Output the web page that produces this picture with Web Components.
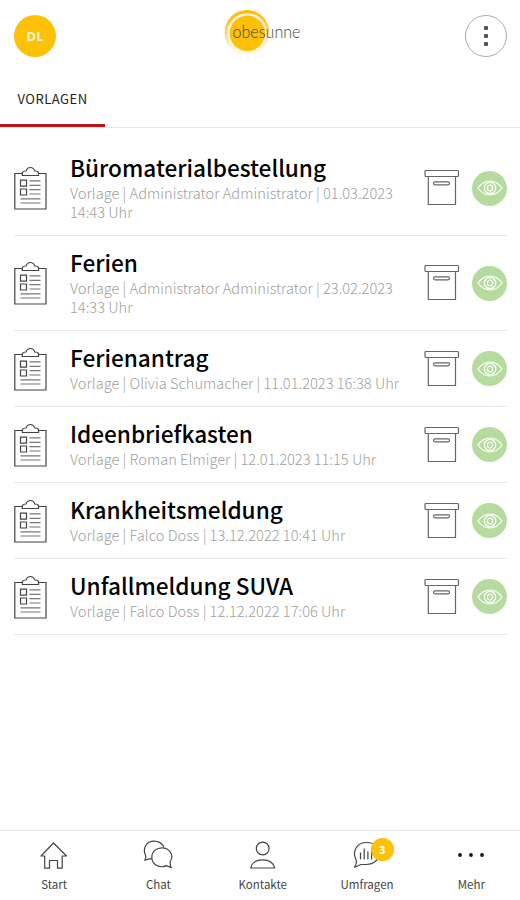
<!DOCTYPE html>
<html lang="de">
<head>
<meta charset="utf-8">
<title>Vorlagen</title>
<style>
html, body { margin: 0; height: 100%; background: #fff; }
body { font-family: "Noto Sans CJK SC", "Noto Sans", sans-serif; color: #111; overflow: hidden; }
</style>
</head>
<body>
<template-app></template-app>
<script>
const icons = {
    clipboard: `<svg width="34" height="44" viewBox="0 0 34 44" fill="none" stroke="#444" stroke-width="1.2">
        <path d="M8.5 7.5H.8V43H32V7.500H24.3"/>
        <path d="M8.300 9.500V6.500Q9 5 12 5Q13.200 1.500 16.400 1.500T20.800 5Q24 5 24.500 6.500V9.500Z"/>
        <path d="M6.500 14.200h6v6h-6zM6.500 23h6v6h-6z"/>
        <path d="M15.500 14.800h11M15.500 19.300h11M15.500 23.700h11M15.500 28h11M6.500 32.800h20M6.500 37h20" stroke="#777"/></svg>`,
    archive: `<svg width="36" height="38" viewBox="0 0 36 38" fill="none" stroke="#666" stroke-width="1.2">
        <rect x="1" y="1.500" width="33.500" height="6" rx="1"/>
        <path d="M4.300 7.500V35.500H31.500V7.500"/>
        <rect x="9.500" y="12.800" width="16" height="3" rx="1.500"/></svg>`,
    eye: `<svg width="26" height="18" viewBox="0 0 26 18" fill="none" stroke="#fff" stroke-width="1.2">
        <path d="M1 9Q6 2 13 2T25 9Q20 16 13 16T1 9Z"/>
        <circle cx="13" cy="9" r="5.700"/><ellipse cx="13" cy="9" rx="2.600" ry="3"/></svg>`,
    home: `<svg width="30" height="30" viewBox="0 0 30 30" fill="none" stroke="#444" stroke-width="1.2">
        <path d="M14.500 3L2 16H5.700V28.200H10.500V20.500H18.500V28.200H23.200V16H27.500Z" stroke-linejoin="round"/></svg>`,
    chat: `<svg width="30" height="30" viewBox="0 0 30 30" fill="none" stroke="#444" stroke-width="1.2" stroke-linejoin="round">
        <path d="M8.800 18.700Q5.500 19 1.800 20.300Q3.300 17.500 2.600 15.500C-1 8 4 1.200 11 1.200Q18 1.200 21 7.200"/>
        <path d="M27.200 21.500Q26.800 25 28.300 27.800L23.500 25.600C16 29 8.800 24 8.800 17.200C8.800 11.500 13.500 7.800 19 7.800C26.500 7.800 31.500 15 27.200 21.500Z"/></svg>`,
    person: `<svg width="30" height="30" viewBox="0 0 30 30" fill="none" stroke="#444" stroke-width="1.2">
        <ellipse cx="14.700" cy="8.500" rx="6.400" ry="6.300"/>
        <path d="M2.700 28C4 22.500 8.500 19.800 14.700 19.800S25.400 22.500 26.700 28Z" stroke-linejoin="round"/></svg>`,
    poll: `<svg width="30" height="30" viewBox="0 0 30 30" fill="none" stroke="#444" stroke-width="1.2" stroke-linejoin="round">
        <path d="M4.300 20.500C-.5 11 5 2.500 14.500 2.500S27.500 8 27.500 13.500S22 24.500 14.500 24.500H9L2.500 27.200Q5 24 4.300 20.500Z"/>
        <path d="M8.500 19.500v-7M12.200 19.500v-11M15.900 19.500v-8M19.600 19.500v-12"/></svg>`,
    more: `<svg width="30" height="30" viewBox="0 0 30 30" fill="#111">
        <circle cx="4" cy="15" r="1.900"/><circle cx="15" cy="15" r="1.900"/><circle cx="26" cy="15" r="1.900"/></svg>`
};

const templates = [
    ['Büromaterialbestellung', 'Vorlage | Administrator Administrator | 01.03.2023 14:43 Uhr'],
    ['Ferien', 'Vorlage | Administrator Administrator | 23.02.2023 14:33 Uhr'],
    ['Ferienantrag', 'Vorlage | Olivia Schumacher | 11.01.2023 16:38 Uhr'],
    ['Ideenbriefkasten', 'Vorlage | Roman Elmiger | 12.01.2023 11:15 Uhr'],
    ['Krankheitsmeldung', 'Vorlage | Falco Doss | 13.12.2022 10:41 Uhr'],
    ['Unfallmeldung SUVA', 'Vorlage | Falco Doss | 12.12.2022 17:06 Uhr']
];

class AppIcon extends HTMLElement {
    connectedCallback() {
        this.attachShadow({mode:'open'}).innerHTML = `
        <style>:host { display: block; flex: none; } svg { display: block; }</style>
        ${icons[this.getAttribute('name')]}`;
    }
}
customElements.define('app-icon', AppIcon);

class BrandLogo extends HTMLElement {
    constructor() {
        super();
        this.attachShadow({mode:'open'}).innerHTML = `
        <style>:host { display: block; } svg { display: block; }</style>
        <svg width="80" height="46" viewBox="0 0 80 46">
            <defs><linearGradient id="ring" x1="0" y1="0" x2="0" y2="1">
                <stop offset="0" stop-color="#fdb90c"/><stop offset=".45" stop-color="#fdd06a"/>
                <stop offset=".9" stop-color="#fffaf0"/>
            </linearGradient></defs>
            <circle cx="24" cy="23.500" r="22.500" fill="url(#ring)"/>
            <circle cx="24.300" cy="24.300" r="20" fill="#fff5dc"/>
            <circle cx="24.300" cy="24.300" r="17.700" fill="#fcc00b"/>
            <text x="9.500" y="29" textLength="68" lengthAdjust="spacingAndGlyphs" font-family="Lato" font-weight="300" font-size="17" fill="#444">obesunne</text>
        </svg>`;
    }
}
customElements.define('brand-logo', BrandLogo);

class AppHeader extends HTMLElement {
    constructor() {
        super();
        this.attachShadow({mode:'open'}).innerHTML = `
        <style>
        :host { display: flex; justify-content: space-between; height: 57px; padding: 0 13px 0 14px; box-sizing: border-box; }
        .avatar, .menu { width: 42px; height: 42px; margin-top: 15px; border-radius: 50%; box-sizing: border-box; display: flex; align-items: center; justify-content: center; }
        .avatar { background: #fdc107; color: #fff4d0; font: 700 13px/1 "Open Sans", sans-serif; }
        .menu { border: 1px solid #aaa; flex-direction: column; gap: 4px; }
        .menu i { width: 4px; height: 4px; border-radius: 1px; background: #555; }
        brand-logo { margin: 9px 0 0 4px; }
        </style>
        <div class="avatar"><slot></slot></div>
        <brand-logo></brand-logo>
        <div class="menu"><i></i><i></i><i></i></div>`;
    }
}
customElements.define('app-header', AppHeader);

class TabBar extends HTMLElement {
    constructor() {
        super();
        this.attachShadow({mode:'open'}).innerHTML = `
        <style>
        :host { display: flex; height: 71px; box-sizing: border-box; border-bottom: 1px solid #e9e9e9; }
        .tab { width: 105px; height: 70px; box-sizing: border-box; padding-top: 32px; border-bottom: 3px solid #b9151b; text-align: center; font-size: 13px; line-height: 20px; letter-spacing: .5px; color: #222; }
        </style>
        <div class="tab"><slot></slot></div>`;
    }
}
customElements.define('tab-bar', TabBar);

class TemplateRow extends HTMLElement {
    constructor() {
        super();
        this.attachShadow({mode:'open'}).innerHTML = `
        <style>
        :host { display: flex; align-items: center; margin: 0 13px 0 14px; border-bottom: 1px solid #e9e9e9; }
        .text { flex: none; width: 340px; margin-left: 22px; padding: 13px 0 14px; }
        .title { font-size: 22.6px; font-weight: 500; line-height: 28px; color: #000; white-space: nowrap; }
        .info { margin-top: 1px; font-size: 14.65px; font-weight: 300; line-height: 19px; color: #a0a0a0; }
        .archive { margin-left: 14px; }
        .eye { width: 35px; height: 35px; margin-left: 12px; border-radius: 50%; background: #b5dc9e; display: flex; align-items: center; justify-content: center; }
        </style>
        <app-icon name="clipboard"></app-icon>
        <div class="text">
            <div class="title"><slot name="title"></slot></div>
            <div class="info"><slot></slot></div>
        </div>
        <app-icon class="archive" name="archive"></app-icon>
        <div class="eye"><app-icon name="eye"></app-icon></div>`;
    }
}
customElements.define('template-row', TemplateRow);

class NavItem extends HTMLElement {
    connectedCallback() {
        const badge = this.getAttribute('badge');
        this.attachShadow({mode:'open'}).innerHTML = `
        <style>
        :host { flex: 0 0 104.3px; display: flex; flex-direction: column; align-items: center; padding-top: 9px; }
        .icon { position: relative; }
        .badge { position: absolute; left: 18.5px; top: -2px; width: 23px; height: 23px; border-radius: 50%; background: #fdc107; color: #fff; font: 700 11px/23px "Open Sans", sans-serif; text-align: center; }
        .label { margin-top: 5px; font-size: 11.5px; line-height: 18px; color: #444; }
        </style>
        <div class="icon">
            <app-icon name="${this.getAttribute('icon')}"></app-icon>
            ${badge ? `<div class="badge">${badge}</div>` : ''}
        </div>
        <div class="label"><slot></slot></div>`;
    }
}
customElements.define('nav-item', NavItem);

class NavBar extends HTMLElement {
    constructor() {
        super();
        this.attachShadow({mode:'open'}).innerHTML = `
        <style>:host { display: flex; height: 70px; box-sizing: border-box; border-top: 1px solid #e6e6e6; padding-left: 2px; }</style>
        <slot></slot>`;
    }
}
customElements.define('nav-bar', NavBar);

class TemplateApp extends HTMLElement {
    constructor() {
        super();
        this.attachShadow({mode:'open'});
        const rows = templates
            .map(([title, info]) => `<template-row><span slot="title">${title}</span>${info}</template-row>`)
            .join('');
        this.shadowRoot.innerHTML = `
        <style>
        :host { display: flex; flex-direction: column; width: 520px; height: 900px; overflow: hidden; }
        main { flex: 1; padding-top: 13px; }
        </style>
        <app-header>DL</app-header>
        <tab-bar>VORLAGEN</tab-bar>
        <main>${rows}</main>
        <nav-bar>
            <nav-item icon="home">Start</nav-item>
            <nav-item icon="chat">Chat</nav-item>
            <nav-item icon="person">Kontakte</nav-item>
            <nav-item icon="poll" badge="3">Umfragen</nav-item>
            <nav-item icon="more">Mehr</nav-item>
        </nav-bar>`;
    }
}
customElements.define('template-app', TemplateApp);
</script>
</body>
</html>
